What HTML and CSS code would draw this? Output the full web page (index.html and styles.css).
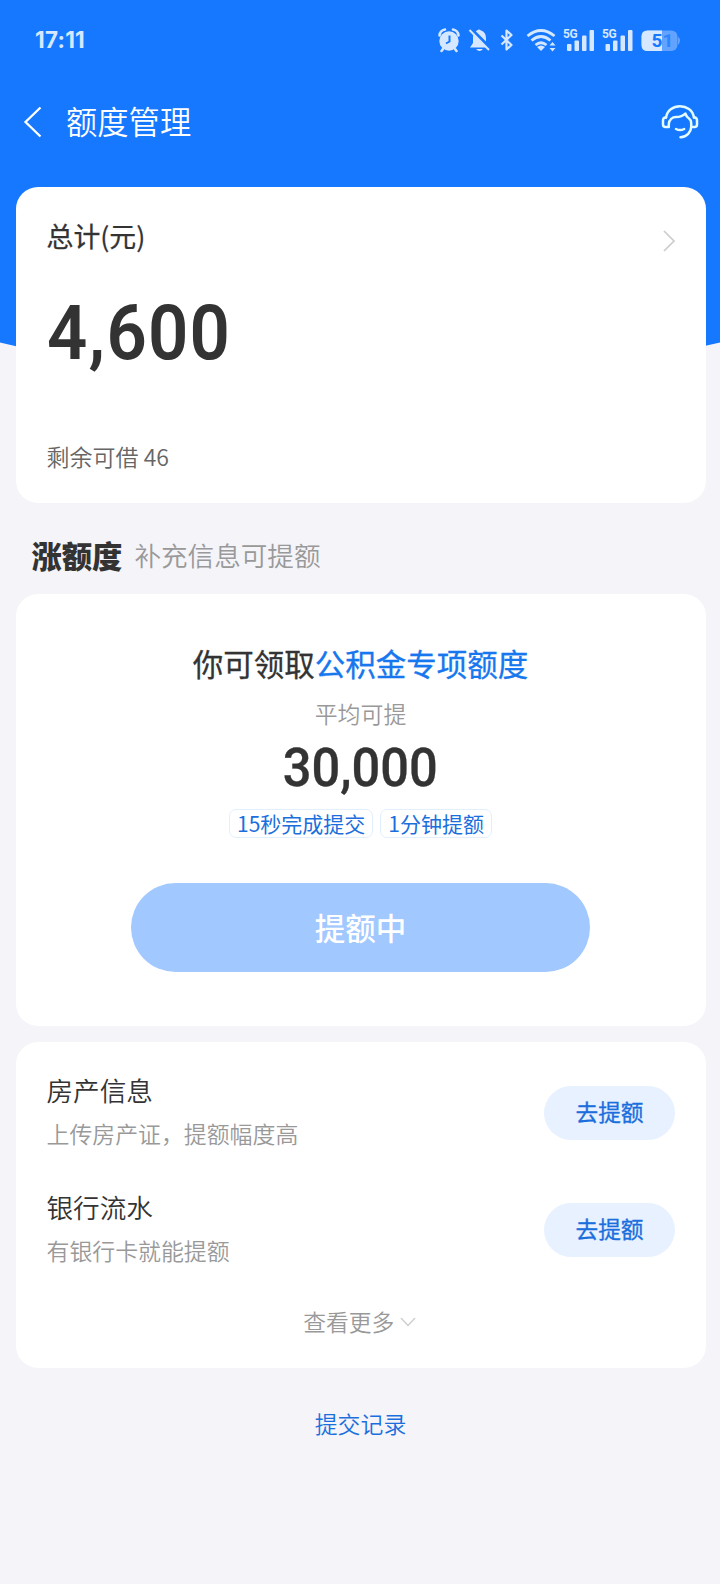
FILE: index.html
```html
<!DOCTYPE html>
<html lang="zh-CN">
<head>
<meta charset="utf-8">
<title>额度管理</title>
<link rel="stylesheet" href="styles.css">
</head>
<body>
<div class="page">
  <svg class="backdrop" viewBox="0 0 720 400" width="720" height="400" aria-hidden="true"><path d="M0 0H720V342.500Q360 430 0 342.500Z" fill="#1677ff"/></svg>

  <div class="status-bar">
    <span class="clock">17:11</span>
    <svg class="status-icons" viewBox="0 0 250 40" width="250" height="40" fill="#d5e8ff" stroke="none">
      <!-- alarm -->
      <circle cx="19" cy="21" r="9.7"/>
      <path d="M9.500 15.500Q10 10.500 15 9.500M28.500 15.500Q28 10.500 23 9.500M13 29L11.500 31M25 29L26.500 31" fill="none" stroke="#d5e8ff" stroke-width="2.600" stroke-linecap="round"/>
      <path d="M19.500 15.500V21.500L16 23.500" fill="none" stroke="#1677ff" stroke-width="2"/>
      <!-- muted bell -->
      <path d="M47 10.500Q49 8.500 51 10.500Q56 12 56 18V23L59 27.500H40L43 23V17Q43 12 47 10.500ZM46 29H53Q49.500 33 46 29Z"/>
      <path d="M41 9L61 29" stroke="#1677ff" stroke-width="3.500"/>
      <path d="M39.500 10L59 30" stroke="#d5e8ff" stroke-width="2"/>
      <!-- bluetooth -->
      <path d="M71.500 15.500L81.500 25L76.500 29.500V10.500L81.500 15L71.500 24.500" fill="none" stroke="#d5e8ff" stroke-width="2.200" stroke-linejoin="round"/>
      <!-- wifi -->
      <path d="M97.500 16Q111 5 124.500 16M101.500 20.500Q111 12.500 120.500 20.500M105.500 25Q111 20.500 116.500 25" fill="none" stroke="#d5e8ff" stroke-width="2.800"/>
      <path d="M107 27Q111 24 115 27L111 31ZM119.500 25.500L122.500 22L125.500 25.500ZM119.500 28L122.500 31.500L125.500 28Z"/>
      <!-- mobile signals -->
      <text class="net" x="133" y="18">5G</text>
      <text class="net" x="172" y="18">5G</text>
      <g id="bars"><rect x="137" y="24" width="4.500" height="7" rx="1"/><rect x="144.500" y="20.500" width="4.500" height="10.500" rx="1"/><rect x="152" y="15.500" width="4.500" height="15.500" rx="1"/><rect x="159.500" y="10" width="4.500" height="21" rx="1"/></g>
      <use href="#bars" x="38.500"/>
      <!-- battery -->
      <rect x="211.500" y="10.500" width="36" height="20.500" rx="6" fill="#61a3ff"/>
      <path d="M248 16.500Q252 20.500 248 25Z" fill="#61a3ff"/>
      <path d="M232 10.500H217.500Q211.500 10.500 211.500 16.500V25Q211.500 31 217.500 31H232Z"/>
      <text class="battery" x="221.500" y="27.300" fill="#1677ff">5<tspan fill="#2f84fb">1</tspan></text>
    </svg>
  </div>

  <header class="nav">
    <svg class="back" width="20" height="32" viewBox="0 0 20 32"><path d="M17.500 1.500L2.500 16L17.500 30.500" fill="none" stroke="#fff" stroke-width="2.300"/></svg>
    <h1 class="nav-title">额度管理</h1>
    <svg class="service" width="38" height="36" viewBox="0 0 38 36" fill="none" stroke="#e4fcff" stroke-width="2.500" stroke-linecap="round" stroke-linejoin="round">
      <path d="M5 13.500C7.500 -1.500 30.500 -1.500 33 13.500"/>
      <path d="M5 13.500H4Q2 14 2 16.500V20.500Q2 23 4.500 23H7.800V20C8 15.500 11.500 13 15 13Q21 13 24.300 9.500Q25.500 13 28 14.500Q30.200 16 30.200 19V23C30 28 26 33 19.500 33.200"/>
      <path d="M30.200 23H33.500Q36 23 36 20.500V16.500Q36 14 34 13.500H33"/>
      <path d="M15 25Q19 27.200 23.200 25"/>
    </svg>
  </header>

  <main class="content">
    <section class="card total">
      <div class="total-head">
        <span class="total-label">总计(元)</span>
        <svg class="more-arrow" width="14" height="22" viewBox="0 0 14 22"><path d="M2 1L12 11L2 21" fill="none" stroke="#ccc" stroke-width="1.700"/></svg>
      </div>
      <div class="total-amount">4,600</div>
      <div class="total-left">剩余可借 46</div>
    </section>

    <div class="section-head">
      <h2 class="section-title">涨额度</h2>
      <span class="section-note">补充信息可提额</span>
    </div>

    <section class="card offer">
      <div class="offer-title">你可领取<span class="accent">公积金专项额度</span></div>
      <div class="offer-note">平均可提</div>
      <div class="offer-amount">30,000</div>
      <div class="tags"><span class="tag">15秒完成提交</span><span class="tag">1分钟提额</span></div>
      <button class="primary">提额中</button>
    </section>

    <section class="card options">
      <div class="option">
        <div class="option-text"><div class="option-title">房产信息</div><div class="option-note">上传房产证，提额幅度高</div></div>
        <button class="go">去提额</button>
      </div>
      <div class="option">
        <div class="option-text"><div class="option-title">银行流水</div><div class="option-note">有银行卡就能提额</div></div>
        <button class="go">去提额</button>
      </div>
      <div class="expand">查看更多<svg width="16" height="10" viewBox="0 0 16 10"><path d="M1 1L8 8.500L15 1" fill="none" stroke="#ccc" stroke-width="1.300"/></svg></div>
    </section>

    <a class="records">提交记录</a>
  </main>
</div>
</body>
</html>
```
FILE: styles.css
```css
* { box-sizing: border-box; }
body {
  margin: 0;
  background: #f4f4f9;
  color: #333;
  font-family: "Noto Sans CJK SC", sans-serif;
}
h1, h2 { margin: 0; font-weight: 400; }
button { border: 0; padding: 0; font-family: inherit; }
.page { position: relative; width: 720px; height: 1584px; overflow: hidden; }
.backdrop { position: absolute; left: 0; top: 0; z-index: -1; }

.status-bar {
  height: 80px;
  padding: 0 37px 0 35px;
  display: flex;
  align-items: center;
  justify-content: space-between;
}
.clock { font: 700 22.500px/30px Inter, sans-serif; color: #d5e8ff; letter-spacing: 0.2px; }
.net { font: 700 12px Roboto, sans-serif; letter-spacing: -0.5px; }
.battery { font: 700 19px Roboto, sans-serif; }
.status-icons { margin-right: 3px; }

.nav {
  height: 84px;
  padding: 0 21px 0 23px;
  display: flex;
  align-items: center;
}
.nav-title { margin: -3px 0 0 23px; font-size: 31.300px; line-height: 46px; color: #fff; font-weight: 350; }
.service { margin-left: auto; }

.content { padding: 23px 14.500px 0 15.500px; display: flex; flex-direction: column; }
.card { background: #fff; border-radius: 22px; }

.total { height: 316px; padding: 29px 30px 0 31px; }
.total-head { height: 40px; display: flex; justify-content: space-between; align-items: center; }
.total-label { font-size: 26.900px; line-height: 40px; font-weight: 400; -webkit-text-stroke: 0.25px; }
.more-arrow { margin-top: 10px; }
.total-amount {
  margin-top: 32px;
  font: 600 76px/90px Roboto, sans-serif;
  letter-spacing: 1.300px;
  transform: scaleX(0.93);
  transform-origin: 0 50%;
}
.total-left { margin-top: 60px; font-size: 23px; line-height: 36px; color: #666; font-weight: 350; }

.section-head { height: 90.500px; padding: 14px 0 0 16px; display: flex; align-items: flex-start; line-height: 76px; }
.section-title { font-size: 30.300px; font-weight: 900; }
.section-note { margin-left: 12px; font-size: 26.600px; color: #999; font-weight: 350; }

.offer { height: 432.500px; padding-top: 47px; display: flex; flex-direction: column; align-items: center; }
.offer-title { font-size: 30.500px; line-height: 44px; font-weight: 400; -webkit-text-stroke: 0.3px; }
.accent { color: #1677ee; }
.offer-note { margin-top: 10px; font-size: 22.900px; line-height: 36px; color: #999; font-weight: 350; }
.offer-amount { margin-top: 6px; font: 500 53px/62px Roboto, sans-serif; transform: scaleX(0.955); -webkit-text-stroke: 0.3px; }
.tags { margin-top: 10px; display: flex; gap: 7px; }
.tag {
  height: 29px;
  padding: 0 7px;
  border: 1px solid #e2effd;
  border-radius: 7px;
  font-size: 21px;
  line-height: 26px;
  color: #1b6fdc;
}
.primary {
  margin-top: 45px;
  width: 459px;
  height: 89px;
  border-radius: 45px;
  background: #a1c8ff;
  color: #fff;
  font-size: 30.500px;
  line-height: 89px;
  font-weight: 500;
}

.options { margin-top: 16px; height: 326px; padding: 28px 30.500px 0 31px; }
.option { height: 117px; display: flex; justify-content: space-between; }
.option-title { font-size: 26.600px; line-height: 40px; font-weight: 350; }
.option-note { margin-top: 5px; font-size: 22.900px; line-height: 36px; color: #999; font-weight: 350; }
.go {
  margin-top: 16px;
  padding-bottom: 3px;
  width: 131px;
  height: 54px;
  border-radius: 27px;
  background: #e7f1ff;
  color: #1b6fdc;
  font-size: 22.700px;
  line-height: 50px;
  font-weight: 400;
  -webkit-text-stroke: 0.3px;
}
.expand { margin-right: 2px; display: flex; justify-content: center; align-items: center; gap: 6px; font-size: 22.800px; line-height: 36px; color: #999; font-weight: 350; }

.records { margin-top: 37px; align-self: center; font-size: 22.900px; line-height: 36px; color: #1b6fdc; font-weight: 350; }
```
